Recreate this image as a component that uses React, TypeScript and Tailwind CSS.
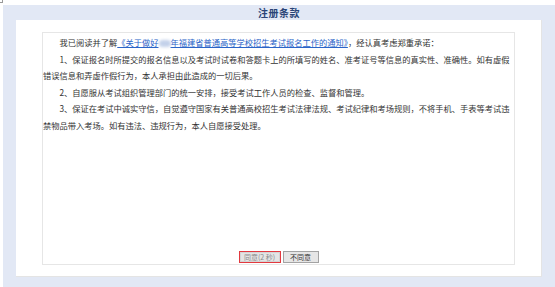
export default function App() {
  const font = { fontFamily: '"Noto Sans CJK SC", "Noto Sans", sans-serif' };

  return (
    <div className="relative w-[555px] h-[287px] bg-white pt-[5px] pl-[3px] overflow-hidden" style={font}>
      <div className="absolute left-0 top-0 w-[3px] h-[3px] border-r border-b border-[#9a9a9a]" />
      <div className="flex flex-col h-[282px] bg-[#e2e8f5] px-[13px] pb-[10px]">
        <div className="h-[15px] flex items-center justify-center">
          <h1 className="text-[10px] font-bold text-[#2a4477] leading-none tracking-[0.5px]">注册条款</h1>
        </div>
        <div className="flex-1 bg-white border-r border-b border-[#e4e4e4] px-[26px] pt-[12px] pb-[11px]">
          <div className="h-full flex flex-col border border-[#e6e6e6]">
            <div className="flex-1 pt-[1px] text-[8.25px] leading-[16.5px] text-[#333]">
              <p className="indent-[2em]">
                我已阅读并了解
                <a className="text-[#2a64c8] underline">
                  《关于做好
                  <span className="inline-block align-middle w-[12px] h-[7px] bg-[#c3d1ea] blur-[1.5px] rounded-sm" />
                  年福建省普通高等学校招生考试报名工作的通知》
                </a>
                ，经认真考虑郑重承诺：
              </p>
              <p className="indent-[2em]">
                1、保证报名时所提交的报名信息以及考试时试卷和答题卡上的所填写的姓名、准考证号等信息的真实性、准确性。如有虚假错误信息和弄虚作假行为，本人承担由此造成的一切后果。
              </p>
              <p className="indent-[2em]">2、自愿服从考试组织管理部门的统一安排，接受考试工作人员的检查、监督和管理。</p>
              <p className="indent-[2em]">
                3、保证在考试中诚实守信，自觉遵守国家有关普通高校招生考试法律法规、考试纪律和考场规则，不将手机、手表等考试违禁物品带入考场。如有违法、违规行为，本人自愿接受处理。
              </p>
            </div>
            <div className="flex justify-center items-center gap-[2px] mb-[1px]">
              <button className="w-[42px] h-[12px] bg-[#e4e4e4] border border-[#e2393f] shadow-[inset_0_0_0_1px_#d4d4d4] flex items-center justify-center text-[7px] leading-none text-[#8a8a8a] whitespace-nowrap">
                同意(2 秒)
              </button>
              <button className="w-[36px] h-[12px] bg-[#e6e6e6] border border-[#a3a3a3] flex items-center justify-center text-[7px] leading-none text-[#333]">
                不同意
              </button>
            </div>
          </div>
        </div>
      </div>
    </div>
  );
}
